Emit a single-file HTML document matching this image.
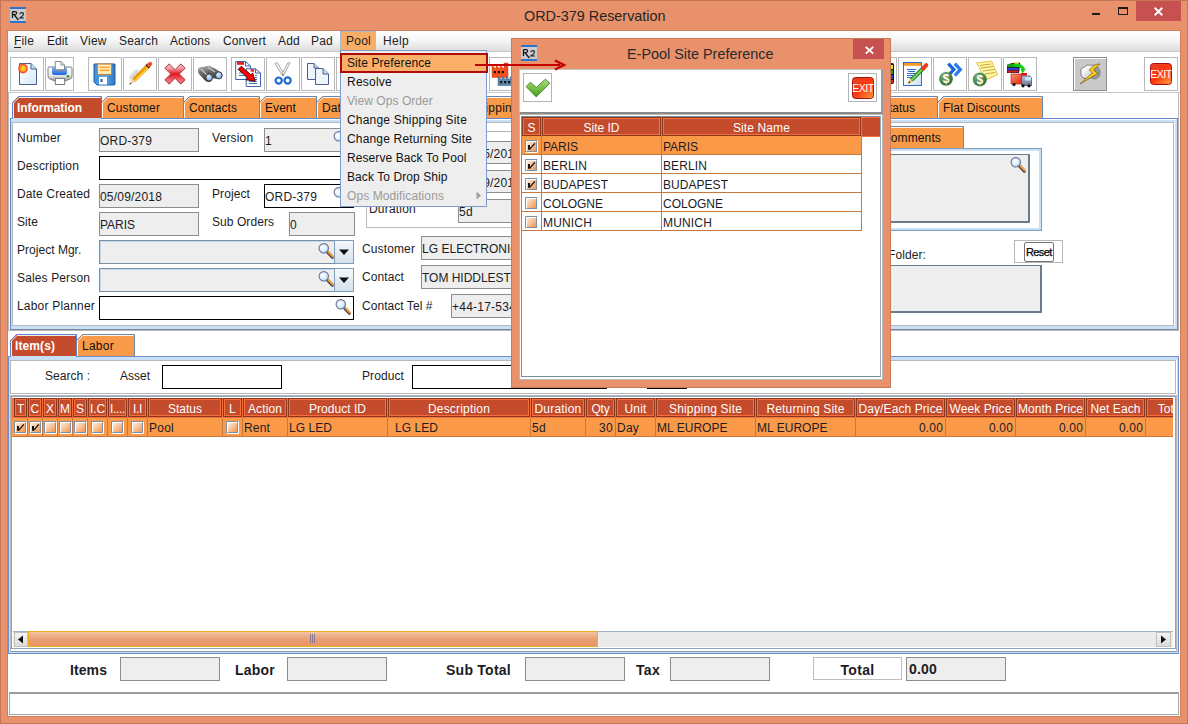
<!DOCTYPE html>
<html><head><meta charset="utf-8"><style>*{margin:0;padding:0;box-sizing:border-box}
html,body{width:1188px;height:724px;overflow:hidden}
body{position:relative;background:#E8916A;font-family:"Liberation Sans",sans-serif;font-size:12px;color:#1c1c24}
.a{position:absolute}
svg.a{overflow:visible}
.t{position:absolute;white-space:nowrap;line-height:14px;font-size:12px}
</style></head><body>
<div class="a" style="left:0px;top:0px;width:1188px;height:1px;background:#C47756"></div>
<div class="a" style="left:0px;top:0px;width:1px;height:724px;background:#C47756"></div>
<div class="a" style="left:1187px;top:0px;width:1px;height:724px;background:#C47756"></div>
<div class="a" style="left:0px;top:723px;width:1188px;height:1px;background:#C47756"></div>
<svg class="a" style="left:10px;top:7px;" width="16" height="16" viewBox="0 0 16 16"><rect x="0" y="0" width="16" height="16" fill="#C9CBCE"/><rect x="0" y="0" width="16" height="2" fill="#2F72C8"/><rect x="0" y="14" width="16" height="2" fill="#2F72C8"/><path d="M2.5 4.5 V11 M4 7.5 L8.3 13.2" stroke="#151515" stroke-width="1.3" fill="none"/><path d="M2.5 4.6 H5 Q6.6 4.6 6.6 6 Q6.6 7.5 5 7.5 H2.5" stroke="#151515" stroke-width="1.1" fill="none"/><path d="M9.6 7 Q10.5 5.6 12 5.6 Q13.5 5.6 13.5 7 Q13.5 8.5 9.8 11 H14" stroke="#202028" stroke-width="1.1" fill="none"/></svg>
<div class="t" style="left:524px;top:7px;font-size:14.4px;line-height:18px;color:#262626">ORD-379 Reservation</div>
<div class="a" style="left:1092px;top:13px;width:8px;height:2px;background:#1b1b1b"></div>
<div class="a" style="left:1118px;top:7px;width:10px;height:8px;border:1px solid #1b1b1b;border-top-width:2px"></div>
<div class="a" style="left:1136px;top:1px;width:45px;height:20px;background:#C75050"></div>
<svg class="a" style="left:1154px;top:7px;" width="9" height="9" viewBox="0 0 9 9"><path d="M0.7 0.8 L8.3 8.2 M8.3 0.8 L0.7 8.2" stroke="#fff" stroke-width="1.9"/></svg>
<div class="a" style="left:7px;top:30px;width:1174px;height:687px;background:#fff;border:1px solid #D0805A"></div>
<div class="a" style="left:8px;top:31px;width:1172px;height:20px;background:linear-gradient(#ffffff,#f6f6f6 45%,#dddddd)"></div>
<div class="a" style="left:8px;top:51px;width:1172px;height:1px;background:#C6C6C6"></div>
<div class="a" style="left:340px;top:31px;width:36px;height:19px;background:#F9AE68;border-left:1px solid #A9B8CC;border-top:1px solid #A9B8CC"></div>
<div class="t" style="left:14px;top:34px;letter-spacing:0.166px;">File</div>
<div class="t" style="left:47px;top:34px;letter-spacing:0.081px;">Edit</div>
<div class="t" style="left:80px;top:34px;letter-spacing:0.248px;">View</div>
<div class="t" style="left:119px;top:34px;letter-spacing:0.163px;">Search</div>
<div class="t" style="left:170px;top:34px;letter-spacing:0.093px;">Actions</div>
<div class="t" style="left:223px;top:34px;letter-spacing:0.140px;">Convert</div>
<div class="t" style="left:278px;top:34px;letter-spacing:0.216px;">Add</div>
<div class="t" style="left:311px;top:34px;letter-spacing:0.216px;">Pad</div>
<div class="t" style="left:346px;top:34px;letter-spacing:0.246px;">Pool</div>
<div class="t" style="left:383px;top:34px;letter-spacing:0.330px;">Help</div>
<div class="a" style="left:14px;top:47px;width:7px;height:1px;background:#222"></div>
<div class="a" style="left:8px;top:92px;width:1172px;height:1px;background:#C8C8C8"></div>
<div class="a" style="left:10px;top:57px;width:34px;height:34px;background:#fff;border:1px solid #B9B9B9"></div>
<div class="a" style="left:88px;top:57px;width:34px;height:34px;background:#fff;border:1px solid #B9B9B9"></div>
<div class="a" style="left:123px;top:57px;width:34px;height:34px;background:#fff;border:1px solid #B9B9B9"></div>
<div class="a" style="left:158px;top:57px;width:34px;height:34px;background:#fff;border:1px solid #B9B9B9"></div>
<div class="a" style="left:193px;top:57px;width:34px;height:34px;background:#fff;border:1px solid #B9B9B9"></div>
<div class="a" style="left:231px;top:57px;width:34px;height:34px;background:#fff;border:1px solid #B9B9B9"></div>
<div class="a" style="left:266px;top:57px;width:34px;height:34px;background:#fff;border:1px solid #B9B9B9"></div>
<div class="a" style="left:301px;top:57px;width:34px;height:34px;background:#fff;border:1px solid #B9B9B9"></div>
<div class="a" style="left:336px;top:57px;width:34px;height:34px;background:#fff;border:1px solid #B9B9B9"></div>
<div class="a" style="left:489px;top:57px;width:34px;height:34px;background:#fff;border:1px solid #B9B9B9"></div>
<div class="a" style="left:863px;top:57px;width:34px;height:34px;background:#fff;border:1px solid #B9B9B9"></div>
<div class="a" style="left:898px;top:57px;width:34px;height:34px;background:#fff;border:1px solid #B9B9B9"></div>
<div class="a" style="left:933px;top:57px;width:34px;height:34px;background:#fff;border:1px solid #B9B9B9"></div>
<div class="a" style="left:968px;top:57px;width:34px;height:34px;background:#fff;border:1px solid #B9B9B9"></div>
<div class="a" style="left:1003px;top:57px;width:34px;height:34px;background:#fff;border:1px solid #B9B9B9"></div>
<div class="a" style="left:1144px;top:57px;width:34px;height:34px;background:#fff;border:1px solid #B9B9B9"></div>
<div class="a" style="left:1073px;top:57px;width:34px;height:34px;background:#C9C9C9;border:1px solid #8E8E8E"></div>
<div class="a" style="left:45px;top:57px;width:29px;height:34px;background:#fff;border:1px solid #B9B9B9"></div>
<svg class="a" style="left:10px;top:57px;" width="34" height="34" viewBox="0 0 34 34"><defs><linearGradient id="pg" x1="0" y1="0" x2="1" y2="1"><stop offset="0" stop-color="#ffffff"/><stop offset="1" stop-color="#D8E8F8"/></linearGradient>
<radialGradient id="st"><stop offset="0" stop-color="#FFE030"/><stop offset="0.45" stop-color="#FFB020"/><stop offset="0.75" stop-color="#F04828"/><stop offset="1" stop-color="#F04828" stop-opacity="0"/></radialGradient></defs>
<path d="M9.5 6.5 H21 L26.5 12 V27.5 H9.5 Z" fill="url(#pg)" stroke="#4A5F8C" stroke-width="1"/>
<path d="M21 6.5 V12 H26.5" fill="#BFDDF4" stroke="#4A5F8C" stroke-width="1"/>
<circle cx="13" cy="11.5" r="5.5" fill="url(#st)"/></svg>
<svg class="a" style="left:45px;top:57px;" width="29" height="34" viewBox="0 0 29 34"><defs><linearGradient id="prb" x1="0" y1="0" x2="0" y2="1"><stop offset="0" stop-color="#ffffff"/><stop offset="0.55" stop-color="#EDEDED"/><stop offset="1" stop-color="#9A9A9A"/></linearGradient>
<linearGradient id="prt" x1="0" y1="0" x2="0" y2="1"><stop offset="0" stop-color="#8CB8F0"/><stop offset="1" stop-color="#1E64E0"/></linearGradient></defs>
<path d="M3 11 Q3 10 4.5 10 H25.5 Q27 10 27 11 V19 Q27 21 25 22 Q20 24.5 15 24.5 Q10 24.5 5 22 Q3 21 3 19 Z" fill="url(#prb)" stroke="#707070" stroke-width="0.9"/>
<path d="M7 10 H22 V15.5 Q22 18 19.5 18 H9.5 Q7 18 7 15.5 Z" fill="url(#prt)"/>
<path d="M10.3 4.5 H16 L19.5 8 V13 H10.3 Z" fill="#fff" stroke="#808080" stroke-width="0.9"/>
<path d="M16 4.5 V8 H19.5" fill="none" stroke="#808080" stroke-width="0.9"/>
<rect x="10" y="12.3" width="10" height="1.6" fill="#8A8A9A"/>
<rect x="10.3" y="21.5" width="9.4" height="6" fill="#fff" stroke="#707070" stroke-width="0.9"/>
<circle cx="23" cy="19.3" r="1.3" fill="#22A02A"/></svg>
<svg class="a" style="left:88px;top:57px;" width="34" height="34" viewBox="0 0 34 34"><defs><linearGradient id="fl" x1="0" y1="0" x2="1" y2="0"><stop offset="0" stop-color="#3C8ED8"/><stop offset="0.5" stop-color="#5AAAE8"/><stop offset="1" stop-color="#2A78C8"/></linearGradient></defs>
<path d="M6 7 H27 V27 Q27 28 26 28 H9 L6 25 Z" fill="url(#fl)" stroke="#1D5FAE" stroke-width="1"/>
<rect x="9.5" y="7" width="14" height="10.5" fill="#FFF0C0" stroke="#C8893A" stroke-width="1.2"/>
<rect x="11.5" y="9.5" width="10" height="1.6" fill="#F6A830"/><rect x="11.5" y="12.5" width="10" height="1.6" fill="#F6A830"/>
<rect x="11" y="20" width="8" height="7.5" fill="#fff"/><rect x="12.5" y="22" width="2" height="3" fill="#1F5FC0"/></svg>
<svg class="a" style="left:123px;top:57px;" width="34" height="34" viewBox="0 0 34 34"><defs><filter id="blr"><feGaussianBlur stdDeviation="1.2"/></filter></defs>
<path d="M7 22 L15 13" stroke="#000" stroke-opacity="0.18" stroke-width="4" filter="url(#blr)"/>
<path d="M6.3 27.7 L9.2 21.6 L12.4 24.8 Z" fill="#F2CFA8"/>
<path d="M6.3 27.7 L7.3 25.5 L8.5 26.7 Z" fill="#333"/>
<path d="M10.8 23.2 L24.5 9.5" stroke="#EC9A08" stroke-width="4.6"/>
<path d="M11.6 24 L25.3 10.3" stroke="#FFD040" stroke-width="1.4"/>
<path d="M24.2 9.8 L25.8 8.2" stroke="#1A1A1A" stroke-width="4.6"/>
<path d="M26 8 L27.2 6.8" stroke="#F05020" stroke-width="4" stroke-linecap="round"/></svg>
<svg class="a" style="left:158px;top:57px;" width="34" height="34" viewBox="0 0 34 34"><defs><linearGradient id="rx" x1="0" y1="0" x2="0" y2="1"><stop offset="0.2" stop-color="#F4A4A8"/><stop offset="0.5" stop-color="#E01820"/><stop offset="0.8" stop-color="#EE6A70"/></linearGradient></defs>
<path d="M6.8 11.2 L11.2 6.8 L17 12.76 L22.8 6.8 L27.2 11.2 L21.24 17 L27.2 22.8 L22.8 27.2 L17 21.24 L11.2 27.2 L6.8 22.8 L12.76 17 Z" fill="url(#rx)" stroke="#A83040" stroke-width="0.9"/></svg>
<svg class="a" style="left:193px;top:57px;" width="34" height="34" viewBox="0 0 34 34"><defs><linearGradient id="bn" x1="0" y1="0" x2="0.3" y2="1"><stop offset="0" stop-color="#B8B8B8"/><stop offset="0.45" stop-color="#6A6A6A"/><stop offset="1" stop-color="#3A3A3A"/></linearGradient>
<radialGradient id="bl" cx="0.4" cy="0.35" r="0.7"><stop offset="0" stop-color="#E4F0FF"/><stop offset="1" stop-color="#6A9CE8"/></radialGradient></defs>
<path d="M5 13 Q5 10 9 10 L14 9 Q16 8.5 18 9.5 L22 11.5 L28 15.5 Q30 17.5 29 20.5 Q27.5 22.5 24 22 L19.5 21 Q19 25 16 25 Q13 25 11.5 23 L6 17 Q4.5 15.5 5 13 Z" fill="url(#bn)"/>
<path d="M8 12 L14 18 M15 10.5 L22 15" stroke="#D8D8D8" stroke-width="1.2" opacity="0.8"/>
<ellipse cx="16.2" cy="20.5" rx="3.3" ry="3.6" fill="url(#bl)" stroke="#333" stroke-width="0.9"/>
<ellipse cx="25.8" cy="18.4" rx="3.3" ry="3.6" fill="url(#bl)" stroke="#333" stroke-width="0.9"/></svg>
<svg class="a" style="left:231px;top:57px;" width="34" height="34" viewBox="0 0 34 34"><path d="M4.7 4.5 H14.5 L19.5 9 V22.5 H4.7 Z" fill="#fff" stroke="#3A60B0" stroke-width="1"/>
<path d="M14.5 4.5 V9 H19.5" fill="none" stroke="#3A60B0" stroke-width="1"/>
<rect x="6" y="5" width="7" height="2.8" fill="#F02010"/>
<path d="M8 16 H16 M8 18.5 H16" stroke="#4A70C0" stroke-width="1"/>
<path d="M15.2 11.8 H24.5 L29.5 16 V29.5 H15.2 Z" fill="#fff" stroke="#3A60B0" stroke-width="1"/>
<path d="M24.5 11.8 V16 H29.5" fill="none" stroke="#3A60B0" stroke-width="1"/>
<rect x="19.7" y="12.2" width="3.3" height="2.5" fill="#F02010"/>
<path d="M24 18.3 H26 M24 20.4 H26 M24 22.5 H26 M18 24.4 H26 M18 26.5 H26" stroke="#4A70C0" stroke-width="1"/>
<path d="M7.14 12.36 L10.25 9.24 L19.85 17.74 L21.7 15.9 L24.2 24.3 L14.9 22.7 L16.74 20.86 Z" fill="#FF0000" stroke="#3A0000" stroke-width="0.9"/></svg>
<svg class="a" style="left:266px;top:57px;" width="34" height="34" viewBox="0 0 34 34"><path d="M9 6.5 Q10 5 11.5 6 L18 17 L16.5 18.5 Z" fill="#FAFAFA" stroke="#9A9A9A" stroke-width="0.9"/>
<path d="M24 6 Q23 5 21.8 6 L16 17 L17.5 18.5 Z" fill="#FAFAFA" stroke="#9A9A9A" stroke-width="0.9"/>
<circle cx="17" cy="18" r="1" fill="#888"/>
<circle cx="12.7" cy="23.6" r="3.1" fill="none" stroke="#1E6AD0" stroke-width="2.2"/>
<circle cx="21.6" cy="23.5" r="3.1" fill="none" stroke="#1E6AD0" stroke-width="2.2"/></svg>
<svg class="a" style="left:301px;top:57px;" width="34" height="34" viewBox="0 0 34 34"><path d="M6.5 6.5 H13 L17.5 11 V22.5 H6.5 Z" fill="#EEF5FC" stroke="#4A5F8C" stroke-width="1"/>
<path d="M13 6.5 V11 H17.5" fill="#BFDDF4" stroke="#4A5F8C" stroke-width="1"/>
<path d="M14.5 11.5 H22 L27.5 17 V27.5 H14.5 Z" fill="#EEF5FC" stroke="#4A5F8C" stroke-width="1"/>
<path d="M22 11.5 V17 H27.5" fill="#BFDDF4" stroke="#4A5F8C" stroke-width="1"/></svg>
<svg class="a" style="left:489px;top:57px;" width="34" height="34" viewBox="0 0 34 34"><path d="M3 20.5 V8.5 L7 12 V8.5 L11 12 V8.5 L15 12 V6 H19 V20.5 Z" fill="#F2501C" stroke="#C83A10" stroke-width="0.5"/>
<rect x="4.8" y="14" width="2.2" height="2.2" fill="#111"/><rect x="8.8" y="14" width="2.2" height="2.2" fill="#111"/><rect x="12.8" y="14" width="2.2" height="2.2" fill="#111"/>
<path d="M9 28.5 V19.5 L13 23 V19.5 L17 23 V19.5 L21 23 V19.5 L25 23 V28.5 Z" fill="#5E86A8" stroke="#3E5E7C" stroke-width="0.5"/>
<rect x="11" y="24" width="2.2" height="2.2" fill="#111"/><rect x="15" y="24" width="2.2" height="2.2" fill="#111"/><rect x="19" y="24" width="2.2" height="2.2" fill="#111"/></svg>
<svg class="a" style="left:863px;top:57px;" width="34" height="34" viewBox="0 0 34 34"><rect x="24" y="6" width="7" height="21" rx="2" fill="#111"/>
<rect x="26" y="8" width="4" height="4" fill="#F0E020"/><rect x="26" y="13" width="4" height="4" fill="#20A030"/><rect x="26" y="18" width="4" height="4" fill="#2040E0"/><rect x="26" y="23" width="4" height="3" fill="#E02020"/></svg>
<svg class="a" style="left:898px;top:57px;" width="34" height="34" viewBox="0 0 34 34"><defs><linearGradient id="dp" x1="0" y1="0" x2="1" y2="1"><stop offset="0.4" stop-color="#ffffff"/><stop offset="1" stop-color="#C8DCF4"/></linearGradient></defs>
<rect x="5.5" y="5.5" width="18" height="23" fill="url(#dp)" stroke="#2E6EC0" stroke-width="1"/>
<rect x="6" y="6" width="17" height="2.8" fill="#F79A2A"/>
<path d="M9 12.5 H18 M10 14.5 H17 M9 16.5 H17 M9 18.5 H15 M9 20.5 H14" stroke="#2A6AC0" stroke-width="1"/>
<path d="M13.5 23 L25.5 11" stroke="#228A22" stroke-width="4"/><path d="M13.5 23 L25.5 11" stroke="#7AD05A" stroke-width="1.8"/>
<path d="M25 11.5 L28.2 8.3" stroke="#E84020" stroke-width="4.2" stroke-linecap="round"/>
<path d="M10.3 26.5 L12 21.6 L15 24.6 Z" fill="#E8C050"/><path d="M10.3 26.5 L11 24.3 L12.5 25.8 Z" fill="#111"/></svg>
<svg class="a" style="left:933px;top:57px;" width="34" height="34" viewBox="0 0 34 34"><defs><radialGradient id="dl" cx="0.35" cy="0.3" r="0.75"><stop offset="0" stop-color="#78B078"/><stop offset="1" stop-color="#2E6A34"/></radialGradient></defs>
<path d="M15.3 6.6 L20.8 12.6 L15.3 18.6" fill="none" stroke="#1A64D8" stroke-width="3.3"/>
<path d="M21.8 6.6 L27.3 12.6 L21.8 18.6" fill="none" stroke="#2A7CEC" stroke-width="3.3"/>
<circle cx="13" cy="21.8" r="6.9" fill="url(#dl)"/>
<text x="13" y="26.2" text-anchor="middle" font-family="Liberation Sans" font-weight="bold" font-size="12" fill="#fff">$</text></svg>
<svg class="a" style="left:968px;top:57px;" width="34" height="34" viewBox="0 0 34 34"><path d="M8.8 5.9 L23.6 4.1 L29.5 17.7 L17.7 23 Z" fill="#FFF6A0" stroke="#E8B828" stroke-width="0.9"/>
<path d="M12 8.5 L23 7 M13 11 L25 9.5 M15 14 L26.5 12.5 M17 17 L27 15.5" stroke="#C8A848" stroke-width="1"/>
<circle cx="11.8" cy="22.4" r="7" fill="url(#dl)"/>
<text x="11.8" y="26.8" text-anchor="middle" font-family="Liberation Sans" font-weight="bold" font-size="12" fill="#fff">$</text></svg>
<svg class="a" style="left:1003px;top:57px;" width="34" height="34" viewBox="0 0 34 34"><defs><linearGradient id="tr" x1="0" y1="0" x2="1" y2="1"><stop offset="0" stop-color="#F89070"/><stop offset="1" stop-color="#E02810"/></linearGradient>
<linearGradient id="cab" x1="0" y1="0" x2="0" y2="1"><stop offset="0" stop-color="#B8C4E0"/><stop offset="1" stop-color="#6A7490"/></linearGradient></defs>
<path d="M4 9 Q6 6 11 6 L16 5.5 Q18 6 17 9 L16 16 H4 Z" fill="#101810"/>
<rect x="4.5" y="7" width="11" height="3.2" fill="#18A018"/>
<rect x="4.5" y="10.8" width="11" height="2.4" fill="#3040D8"/>
<rect x="4.5" y="13.6" width="11" height="2" fill="#D82020"/>
<ellipse cx="13.5" cy="6" rx="2.5" ry="1.2" fill="#E8E060"/>
<path d="M11 8 Q18 7.5 20.5 12" stroke="#10D010" stroke-width="3" fill="none"/>
<path d="M17.5 12 L23 11.5 L19.5 16.5 Z" fill="#10D010"/>
<rect x="18" y="16" width="6" height="2.6" fill="#E81010"/>
<rect x="8" y="17" width="11" height="10" fill="url(#tr)" stroke="#A02010" stroke-width="0.6"/>
<path d="M18.5 19 H27 L28.5 21 V28.5 H18.5 Z" fill="url(#cab)" stroke="#404860" stroke-width="0.7"/>
<rect x="22" y="20" width="6" height="3.5" fill="#C8E4F8"/>
<circle cx="11" cy="27.5" r="1.6" fill="#111"/><circle cx="20" cy="28.8" r="1.6" fill="#111"/><circle cx="26" cy="28.8" r="1.6" fill="#111"/></svg>
<div class="a" style="left:1074px;top:58px;width:32px;height:32px;border-left:1px solid #fff;border-top:1px solid #fff"></div>
<svg class="a" style="left:1073px;top:57px;" width="34" height="34" viewBox="0 0 34 34"><defs><linearGradient id="cl" x1="0" y1="0" x2="1" y2="1"><stop offset="0.3" stop-color="#FAFAFA"/><stop offset="1" stop-color="#B8B8B8"/></linearGradient></defs>
<ellipse cx="21.5" cy="15.5" rx="5.5" ry="6.5" fill="#9C9C9C" stroke="#666" stroke-width="0.7"/>
<path d="M8 16 Q7 11 11.5 10 Q13.5 7 17.5 8.3 Q20.5 6.8 21.5 10 Q23 13 20.5 19 Q17 22.5 12 21.5 Q7.5 20.5 8 16 Z" fill="url(#cl)" stroke="#555" stroke-width="0.7"/>
<path d="M22 7.5 L26.8 7 L20.5 13 L25 16.5 L7 27 L19.5 15.8 L16 13 Z" fill="#F6CC18" stroke="#5A4A10" stroke-width="0.6"/></svg>
<svg class="a" style="left:1150px;top:63px;" width="22" height="22" viewBox="0 0 22 22"><defs><linearGradient id="ex1150" x1="0" y1="0" x2="1" y2="1"><stop offset="0" stop-color="#E04028"/><stop offset="0.5" stop-color="#FF3A10"/><stop offset="1" stop-color="#FFA040"/></linearGradient></defs>
<rect x="0.5" y="0.5" width="21" height="21" rx="3" fill="url(#ex1150)" stroke="#A01010" stroke-width="1"/>
<text x="11" y="15" text-anchor="middle" font-family="Liberation Sans" font-size="10.5" fill="#fff" letter-spacing="-0.5">EXIT</text></svg>
<svg class="a" style="left:101px;top:96px;" width="83" height="22" viewBox="0 0 83 22"><path d="M0.5 22 V6.5 L6.5 0.5 H82.5 V22" fill="#F99A49" stroke="#6C86A8" stroke-width="1"/><path d="M1.5 22 V7 L7 1.5 H81.5" fill="none" stroke="#ffffff" stroke-width="1" opacity="0.9"/></svg>
<div class="t" style="left:107px;top:101px;letter-spacing:0.123px;color:#111;">Customer</div>
<svg class="a" style="left:183px;top:96px;" width="77" height="22" viewBox="0 0 77 22"><path d="M0.5 22 V6.5 L6.5 0.5 H76.5 V22" fill="#F99A49" stroke="#6C86A8" stroke-width="1"/><path d="M1.5 22 V7 L7 1.5 H75.5" fill="none" stroke="#ffffff" stroke-width="1" opacity="0.9"/></svg>
<div class="t" style="left:189px;top:101px;letter-spacing:0.081px;color:#111;">Contacts</div>
<svg class="a" style="left:259px;top:96px;" width="58" height="22" viewBox="0 0 58 22"><path d="M0.5 22 V6.5 L6.5 0.5 H57.5 V22" fill="#F99A49" stroke="#6C86A8" stroke-width="1"/><path d="M1.5 22 V7 L7 1.5 H56.5" fill="none" stroke="#ffffff" stroke-width="1" opacity="0.9"/></svg>
<div class="t" style="left:265px;top:101px;letter-spacing:0.063px;color:#111;">Event</div>
<svg class="a" style="left:316px;top:96px;" width="149" height="22" viewBox="0 0 149 22"><path d="M0.5 22 V6.5 L6.5 0.5 H148.5 V22" fill="#F99A49" stroke="#6C86A8" stroke-width="1"/><path d="M1.5 22 V7 L7 1.5 H147.5" fill="none" stroke="#ffffff" stroke-width="1" opacity="0.9"/></svg>
<div class="t" style="left:322px;top:101px;letter-spacing:0.130px;color:#111;">Dates</div>
<svg class="a" style="left:464px;top:96px;" width="97" height="22" viewBox="0 0 97 22"><path d="M0.5 22 V6.5 L6.5 0.5 H96.5 V22" fill="#F99A49" stroke="#6C86A8" stroke-width="1"/><path d="M1.5 22 V7 L7 1.5 H95.5" fill="none" stroke="#ffffff" stroke-width="1" opacity="0.9"/></svg>
<div class="t" style="left:470px;top:101px;letter-spacing:0.287px;color:#111;">Shipping</div>
<svg class="a" style="left:875px;top:96px;" width="63" height="22" viewBox="0 0 63 22"><path d="M0.5 22 V6.5 L6.5 0.5 H62.5 V22" fill="#F99A49" stroke="#6C86A8" stroke-width="1"/><path d="M1.5 22 V7 L7 1.5 H61.5" fill="none" stroke="#ffffff" stroke-width="1" opacity="0.9"/></svg>
<div class="t" style="left:881px;top:101px;color:#111;">Status</div>
<svg class="a" style="left:937px;top:96px;" width="106" height="22" viewBox="0 0 106 22"><path d="M0.5 22 V6.5 L6.5 0.5 H105.5 V22" fill="#F99A49" stroke="#6C86A8" stroke-width="1"/><path d="M1.5 22 V7 L7 1.5 H104.5" fill="none" stroke="#ffffff" stroke-width="1" opacity="0.9"/></svg>
<div class="t" style="left:943px;top:101px;letter-spacing:0.070px;color:#111;">Flat Discounts</div>
<div class="a" style="left:8px;top:93px;width:1px;height:238px;background:#B8B8B8"></div>
<div class="a" style="left:1178px;top:93px;width:1px;height:238px;background:#B8B8B8"></div>
<div class="a" style="left:8px;top:330px;width:1171px;height:1px;background:#B8B8B8"></div>
<div class="a" style="left:10px;top:118px;width:1168px;height:212px;border:1px solid #5F86CF;border-right-color:#7888A0;border-bottom-color:#7888A0"></div>
<div class="a" style="left:11px;top:119px;width:1166px;height:210px;border-style:solid;border-color:#C8DFF6;border-width:3px 2px 3px 1px"></div>
<div class="a" style="left:11px;top:119px;width:1165px;height:1px;background:#fff"></div>
<div class="a" style="left:12px;top:122px;width:1162px;height:204px;border:1px solid #B8B8B8;background:#fff"></div>
<svg class="a" style="left:12px;top:96px;" width="90" height="22" viewBox="0 0 90 22"><path d="M0.5 22 V6.5 L6.5 0.5 H89.5 V22" fill="#C44B2B" stroke="#5B82CF" stroke-width="1"/><path d="M1.5 22 V7 L7 1.5 H88.5" fill="none" stroke="#ffffff" stroke-width="1" opacity="0.9"/></svg>
<div class="t" style="left:17px;top:101px;letter-spacing:-0.090px;color:#fff;font-weight:bold;">Information</div>
<div class="a" style="left:13px;top:118px;width:88px;height:3px;background:#C8DFF6"></div>
<div class="t" style="left:17px;top:131px;letter-spacing:0.220px;">Number</div>
<div class="t" style="left:17px;top:159px;letter-spacing:0.180px;">Description</div>
<div class="t" style="left:17px;top:187px;letter-spacing:0.136px;">Date Created</div>
<div class="t" style="left:17px;top:215px;letter-spacing:0.081px;">Site</div>
<div class="t" style="left:17px;top:243px;letter-spacing:0.027px;">Project Mgr.</div>
<div class="t" style="left:17px;top:271px;letter-spacing:0.136px;">Sales Person</div>
<div class="t" style="left:17px;top:299px;letter-spacing:0.201px;">Labor Planner</div>
<div class="a" style="left:99px;top:128px;width:100px;height:24px;background:#EEEEEE;border:1px solid #8D8D8D;"></div>
<div class="t" style="left:100px;top:134px;letter-spacing:0.188px;">ORD-379</div>
<div class="a" style="left:99px;top:156px;width:360px;height:24px;background:#fff;border:1px solid #000"></div>
<div class="a" style="left:99px;top:184px;width:100px;height:24px;background:#EEEEEE;border:1px solid #8D8D8D;"></div>
<div class="t" style="left:100px;top:190px;letter-spacing:0.194px;">05/09/2018</div>
<div class="a" style="left:99px;top:212px;width:100px;height:24px;background:#EEEEEE;border:1px solid #8D8D8D;"></div>
<div class="t" style="left:100px;top:218px;">PARIS</div>
<div class="a" style="left:99px;top:240px;width:255px;height:24px;background:#EEEEEE;border:1px solid #7A8EA4;box-shadow:inset 1px 1px 0 #C4D8EE"></div>
<svg class="a" style="left:318px;top:243px;" width="17" height="17" viewBox="0 0 17 17"><defs><radialGradient id="mg318_243" cx="0.4" cy="0.4" r="0.65"><stop offset="0" stop-color="#ffffff"/><stop offset="0.6" stop-color="#D8F0FC"/><stop offset="1" stop-color="#90CCF0"/></radialGradient></defs>
<path d="M9.6 9.2 L14.4 14.2" stroke="#404058" stroke-width="3.2" stroke-linecap="round"/>
<path d="M10.2 8.8 L14.9 13.7" stroke="#F6A232" stroke-width="1.9" stroke-linecap="round"/>
<circle cx="5.8" cy="5.3" r="4.7" fill="url(#mg318_243)" stroke="#707098" stroke-width="1.1"/></svg>
<div class="a" style="left:334px;top:240px;width:20px;height:24px;background:linear-gradient(#f4f8fc,#d4e2ee);border:1px solid #7F9DB9"></div>
<svg class="a" style="left:338px;top:249px;" width="12" height="7" viewBox="0 0 12 7"><path d="M1 0.5 H11 L6 6 Z" fill="#111"/></svg>
<div class="a" style="left:99px;top:268px;width:255px;height:24px;background:#EEEEEE;border:1px solid #7A8EA4;box-shadow:inset 1px 1px 0 #C4D8EE"></div>
<svg class="a" style="left:318px;top:271px;" width="17" height="17" viewBox="0 0 17 17"><defs><radialGradient id="mg318_271" cx="0.4" cy="0.4" r="0.65"><stop offset="0" stop-color="#ffffff"/><stop offset="0.6" stop-color="#D8F0FC"/><stop offset="1" stop-color="#90CCF0"/></radialGradient></defs>
<path d="M9.6 9.2 L14.4 14.2" stroke="#404058" stroke-width="3.2" stroke-linecap="round"/>
<path d="M10.2 8.8 L14.9 13.7" stroke="#F6A232" stroke-width="1.9" stroke-linecap="round"/>
<circle cx="5.8" cy="5.3" r="4.7" fill="url(#mg318_271)" stroke="#707098" stroke-width="1.1"/></svg>
<div class="a" style="left:334px;top:268px;width:20px;height:24px;background:linear-gradient(#f4f8fc,#d4e2ee);border:1px solid #7F9DB9"></div>
<svg class="a" style="left:338px;top:277px;" width="12" height="7" viewBox="0 0 12 7"><path d="M1 0.5 H11 L6 6 Z" fill="#111"/></svg>
<div class="a" style="left:99px;top:296px;width:255px;height:24px;background:#fff;border:1px solid #000"></div>
<svg class="a" style="left:335px;top:299px;" width="17" height="17" viewBox="0 0 17 17"><defs><radialGradient id="mg335_299" cx="0.4" cy="0.4" r="0.65"><stop offset="0" stop-color="#ffffff"/><stop offset="0.6" stop-color="#D8F0FC"/><stop offset="1" stop-color="#90CCF0"/></radialGradient></defs>
<path d="M9.6 9.2 L14.4 14.2" stroke="#404058" stroke-width="3.2" stroke-linecap="round"/>
<path d="M10.2 8.8 L14.9 13.7" stroke="#F6A232" stroke-width="1.9" stroke-linecap="round"/>
<circle cx="5.8" cy="5.3" r="4.7" fill="url(#mg335_299)" stroke="#707098" stroke-width="1.1"/></svg>
<div class="t" style="left:212px;top:131px;letter-spacing:0.188px;">Version</div>
<div class="t" style="left:212px;top:187px;letter-spacing:0.093px;">Project</div>
<div class="t" style="left:212px;top:215px;letter-spacing:0.064px;">Sub Orders</div>
<div class="a" style="left:264px;top:128px;width:90px;height:24px;background:#EEEEEE;border:1px solid #8D8D8D;"></div>
<div class="t" style="left:265px;top:134px;letter-spacing:0.326px;">1</div>
<svg class="a" style="left:333px;top:131px;" width="17" height="17" viewBox="0 0 17 17"><defs><radialGradient id="mg333_131" cx="0.4" cy="0.4" r="0.65"><stop offset="0" stop-color="#ffffff"/><stop offset="0.6" stop-color="#D8F0FC"/><stop offset="1" stop-color="#90CCF0"/></radialGradient></defs>
<path d="M9.6 9.2 L14.4 14.2" stroke="#404058" stroke-width="3.2" stroke-linecap="round"/>
<path d="M10.2 8.8 L14.9 13.7" stroke="#F6A232" stroke-width="1.9" stroke-linecap="round"/>
<circle cx="5.8" cy="5.3" r="4.7" fill="url(#mg333_131)" stroke="#707098" stroke-width="1.1"/></svg>
<div class="a" style="left:264px;top:184px;width:90px;height:24px;background:#fff;border:1px solid #000"></div>
<div class="t" style="left:265px;top:190px;letter-spacing:0.188px;">ORD-379</div>
<svg class="a" style="left:333px;top:187px;" width="17" height="17" viewBox="0 0 17 17"><defs><radialGradient id="mg333_187" cx="0.4" cy="0.4" r="0.65"><stop offset="0" stop-color="#ffffff"/><stop offset="0.6" stop-color="#D8F0FC"/><stop offset="1" stop-color="#90CCF0"/></radialGradient></defs>
<path d="M9.6 9.2 L14.4 14.2" stroke="#404058" stroke-width="3.2" stroke-linecap="round"/>
<path d="M10.2 8.8 L14.9 13.7" stroke="#F6A232" stroke-width="1.9" stroke-linecap="round"/>
<circle cx="5.8" cy="5.3" r="4.7" fill="url(#mg333_187)" stroke="#707098" stroke-width="1.1"/></svg>
<div class="a" style="left:289px;top:212px;width:66px;height:24px;background:#EEEEEE;border:1px solid #8D8D8D;"></div>
<div class="t" style="left:290px;top:218px;letter-spacing:0.326px;">0</div>
<div class="a" style="left:366px;top:131px;width:160px;height:97px;border:1px solid #BBBBBB;border-top-color:#B4B4B4"></div>
<div class="a" style="left:456px;top:141px;width:100px;height:23px;background:#EEEEEE;border:1px solid #8D8D8D;"></div>
<div class="t" style="left:459px;top:147px;letter-spacing:0.194px;">05/05/2018</div>
<div class="a" style="left:456px;top:170px;width:100px;height:23px;background:#EEEEEE;border:1px solid #8D8D8D;"></div>
<div class="t" style="left:459px;top:176px;letter-spacing:0.194px;">05/09/2018</div>
<div class="t" style="left:369px;top:202px;letter-spacing:0.205px;">Duration</div>
<div class="a" style="left:458px;top:199px;width:60px;height:24px;background:#EEEEEE;border:1px solid #8D8D8D;"></div>
<div class="t" style="left:459px;top:205px;letter-spacing:0.326px;">5d</div>
<div class="t" style="left:362px;top:242px;letter-spacing:0.123px;">Customer</div>
<div class="a" style="left:421px;top:236px;width:100px;height:24px;background:#EEEEEE;border:1px solid #8D8D8D;"></div>
<div class="t" style="left:422px;top:242px;letter-spacing:0.022px;">LG ELECTRONICS</div>
<div class="t" style="left:362px;top:270px;letter-spacing:0.092px;">Contact</div>
<div class="a" style="left:421px;top:265px;width:100px;height:24px;background:#EEEEEE;border:1px solid #8D8D8D;"></div>
<div class="t" style="left:422px;top:271px;letter-spacing:-0.024px;">TOM HIDDLESTON</div>
<div class="t" style="left:362px;top:299px;letter-spacing:0.049px;">Contact Tel #</div>
<div class="a" style="left:451px;top:294px;width:70px;height:24px;background:#EEEEEE;border:1px solid #8D8D8D;"></div>
<div class="t" style="left:452px;top:300px;letter-spacing:0.237px;">+44-17-5345</div>
<svg class="a" style="left:876px;top:126px;" width="88" height="22" viewBox="0 0 88 22"><path d="M0.5 22 V6.5 L6.5 0.5 H87.5 V22" fill="#F99A49" stroke="#6C86A8" stroke-width="1"/><path d="M1.5 22 V7 L7 1.5 H86.5" fill="none" stroke="#ffffff" stroke-width="1" opacity="0.9"/></svg>
<div class="t" style="left:882px;top:131px;letter-spacing:0.123px;color:#111;">Comments</div>
<div class="a" style="left:880px;top:148px;width:162px;height:83px;border:1px solid #7F9DB9;background:#fff"></div>
<div class="a" style="left:881px;top:149px;width:160px;height:81px;border:2px solid #C8DFF6"></div>
<div class="a" style="left:883px;top:154px;width:147px;height:69px;background:#EEEEEE;border:1px solid #6D7A88;border-width:1px 2px 2px 1px"></div>
<svg class="a" style="left:1010px;top:157px;" width="17" height="17" viewBox="0 0 17 17"><defs><radialGradient id="mg1010_157" cx="0.4" cy="0.4" r="0.65"><stop offset="0" stop-color="#ffffff"/><stop offset="0.6" stop-color="#D8F0FC"/><stop offset="1" stop-color="#90CCF0"/></radialGradient></defs>
<path d="M9.6 9.2 L14.4 14.2" stroke="#404058" stroke-width="3.2" stroke-linecap="round"/>
<path d="M10.2 8.8 L14.9 13.7" stroke="#F6A232" stroke-width="1.9" stroke-linecap="round"/>
<circle cx="5.8" cy="5.3" r="4.7" fill="url(#mg1010_157)" stroke="#707098" stroke-width="1.1"/></svg>
<div class="t" style="left:888px;top:248px;letter-spacing:0.093px;">Folder:</div>
<div class="a" style="left:1014px;top:240px;width:49px;height:23px;border:1px solid #B8B8B8;background:#fff"></div>
<div class="a" style="left:1024px;top:242px;width:30px;height:20px;border:1px solid #7A7272;border-radius:2px;background:#fff"></div>
<div class="t" style="left:1026px;top:246px;font-size:11px;line-height:13px;color:#000;letter-spacing:-0.6px;-webkit-text-stroke:0.25px #000">Reset</div>
<div class="a" style="left:880px;top:265px;width:162px;height:48px;background:#EEEEEE;border:1px solid #6D7A88;border-width:1px 2px 2px 1px"></div>
<svg class="a" style="left:76px;top:334px;" width="59" height="22" viewBox="0 0 59 22"><path d="M0.5 22 V6.5 L6.5 0.5 H58.5 V22" fill="#F99A49" stroke="#6C86A8" stroke-width="1"/><path d="M1.5 22 V7 L7 1.5 H57.5" fill="none" stroke="#ffffff" stroke-width="1" opacity="0.9"/></svg>
<div class="t" style="left:82px;top:339px;letter-spacing:0.262px;color:#111;">Labor</div>
<div class="a" style="left:8px;top:356px;width:1171px;height:298px;border:1px solid #6E8FCB"></div>
<div class="a" style="left:9px;top:357px;width:1169px;height:296px;border:1px solid #C8DFF6;border-top-width:3px;border-bottom-width:2px"></div>
<div class="a" style="left:10px;top:360px;width:1166px;height:34px;border:1px solid #B8B8B8;background:#fff"></div>
<svg class="a" style="left:10px;top:334px;" width="67" height="22" viewBox="0 0 67 22"><path d="M0.5 22 V6.5 L6.5 0.5 H66.5 V22" fill="#C44B2B" stroke="#5B82CF" stroke-width="1"/><path d="M1.5 22 V7 L7 1.5 H65.5" fill="none" stroke="#ffffff" stroke-width="1" opacity="0.9"/></svg>
<div class="t" style="left:15px;top:339px;letter-spacing:0.094px;color:#fff;font-weight:bold;">Item(s)</div>
<div class="a" style="left:11px;top:356px;width:65px;height:3px;background:#C8DFF6"></div>
<div class="t" style="left:45px;top:369px;letter-spacing:0.039px;">Search :</div>
<div class="t" style="left:120px;top:369px;">Asset</div>
<div class="a" style="left:162px;top:365px;width:120px;height:24px;background:#fff;border:1px solid #000"></div>
<div class="t" style="left:362px;top:369px;letter-spacing:0.092px;">Product</div>
<div class="a" style="left:412px;top:365px;width:195px;height:24px;background:#fff;border:1px solid #000"></div>
<div class="a" style="left:647px;top:365px;width:40px;height:24px;background:#fff;border:1px solid #000"></div>
<div class="a" style="left:10px;top:395px;width:1167px;height:257px;border:1px solid #B8B8B8;border-bottom-color:#8398B0;background:#fff"></div>
<div class="a" style="left:11px;top:396px;width:1165px;height:253px;border:1px solid #8DA4BE"></div>
<div class="a" style="left:12px;top:398px;width:1161px;height:20px;background:#F4703E"></div>
<div class="a" style="left:0;top:0;width:1173px;height:724px;overflow:hidden">
<div class="a" style="left:14px;top:398px;width:13px;height:19px;background:#C44B2B;border:1px solid #8A381C;box-shadow:inset 0 0 0 1px #F4703E"></div>
<div class="t" style="left:13px;top:402px;width:15px;text-align:center;letter-spacing:-0.330px;color:#fff">T</div>
<div class="a" style="left:28px;top:398px;width:14px;height:19px;background:#C44B2B;border:1px solid #8A381C;box-shadow:inset 0 0 0 1px #F4703E"></div>
<div class="t" style="left:27px;top:402px;width:16px;text-align:center;letter-spacing:0.334px;color:#fff">C</div>
<div class="a" style="left:43px;top:398px;width:14px;height:19px;background:#C44B2B;border:1px solid #8A381C;box-shadow:inset 0 0 0 1px #F4703E"></div>
<div class="t" style="left:42px;top:402px;width:16px;text-align:center;letter-spacing:-0.004px;color:#fff">X</div>
<div class="a" style="left:58px;top:398px;width:14px;height:19px;background:#C44B2B;border:1px solid #8A381C;box-shadow:inset 0 0 0 1px #F4703E"></div>
<div class="t" style="left:57px;top:402px;width:16px;text-align:center;letter-spacing:0.004px;color:#fff">M</div>
<div class="a" style="left:73px;top:398px;width:14px;height:19px;background:#C44B2B;border:1px solid #8A381C;box-shadow:inset 0 0 0 1px #F4703E"></div>
<div class="t" style="left:72px;top:402px;width:16px;text-align:center;letter-spacing:-0.004px;color:#fff">S</div>
<div class="a" style="left:88px;top:398px;width:19px;height:19px;background:#C44B2B;border:1px solid #8A381C;box-shadow:inset 0 0 0 1px #F4703E"></div>
<div class="t" style="left:87px;top:402px;width:21px;text-align:center;letter-spacing:-0.111px;color:#fff">I.C</div>
<div class="a" style="left:108px;top:398px;width:19px;height:19px;background:#C44B2B;border:1px solid #8A381C;box-shadow:inset 0 0 0 1px #F4703E"></div>
<div class="t" style="left:107px;top:402px;width:21px;text-align:center;letter-spacing:-0.334px;color:#fff">I....</div>
<div class="a" style="left:128px;top:398px;width:19px;height:19px;background:#C44B2B;border:1px solid #8A381C;box-shadow:inset 0 0 0 1px #F4703E"></div>
<div class="t" style="left:127px;top:402px;width:21px;text-align:center;letter-spacing:-0.334px;color:#fff">I.I</div>
<div class="a" style="left:148px;top:398px;width:74px;height:19px;background:#C44B2B;border:1px solid #8A381C;box-shadow:inset 0 0 0 1px #F4703E"></div>
<div class="t" style="left:147px;top:402px;width:76px;text-align:center;letter-spacing:-0.003px;color:#fff">Status</div>
<div class="a" style="left:223px;top:398px;width:19px;height:19px;background:#C44B2B;border:1px solid #8A381C;box-shadow:inset 0 0 0 1px #F4703E"></div>
<div class="t" style="left:222px;top:402px;width:21px;text-align:center;letter-spacing:0.326px;color:#fff">L</div>
<div class="a" style="left:243px;top:398px;width:44px;height:19px;background:#C44B2B;border:1px solid #8A381C;box-shadow:inset 0 0 0 1px #F4703E"></div>
<div class="t" style="left:242px;top:402px;width:46px;text-align:center;letter-spacing:0.108px;color:#fff">Action</div>
<div class="a" style="left:288px;top:398px;width:99px;height:19px;background:#C44B2B;border:1px solid #8A381C;box-shadow:inset 0 0 0 1px #F4703E"></div>
<div class="t" style="left:287px;top:402px;width:101px;text-align:center;letter-spacing:0.031px;color:#fff">Product ID</div>
<div class="a" style="left:388px;top:398px;width:142px;height:19px;background:#C44B2B;border:1px solid #8A381C;box-shadow:inset 0 0 0 1px #F4703E"></div>
<div class="t" style="left:387px;top:402px;width:144px;text-align:center;letter-spacing:0.180px;color:#fff">Description</div>
<div class="a" style="left:531px;top:398px;width:54px;height:19px;background:#C44B2B;border:1px solid #8A381C;box-shadow:inset 0 0 0 1px #F4703E"></div>
<div class="t" style="left:530px;top:402px;width:56px;text-align:center;letter-spacing:0.205px;color:#fff">Duration</div>
<div class="a" style="left:586px;top:398px;width:29px;height:19px;background:#C44B2B;border:1px solid #8A381C;box-shadow:inset 0 0 0 1px #F4703E"></div>
<div class="t" style="left:585px;top:402px;width:31px;text-align:center;letter-spacing:-0.223px;color:#fff">Qty</div>
<div class="a" style="left:616px;top:398px;width:39px;height:19px;background:#C44B2B;border:1px solid #8A381C;box-shadow:inset 0 0 0 1px #F4703E"></div>
<div class="t" style="left:615px;top:402px;width:41px;text-align:center;letter-spacing:0.165px;color:#fff">Unit</div>
<div class="a" style="left:656px;top:398px;width:99px;height:19px;background:#C44B2B;border:1px solid #8A381C;box-shadow:inset 0 0 0 1px #F4703E"></div>
<div class="t" style="left:655px;top:402px;width:101px;text-align:center;letter-spacing:0.176px;color:#fff">Shipping Site</div>
<div class="a" style="left:756px;top:398px;width:99px;height:19px;background:#C44B2B;border:1px solid #8A381C;box-shadow:inset 0 0 0 1px #F4703E"></div>
<div class="t" style="left:755px;top:402px;width:101px;text-align:center;letter-spacing:0.140px;color:#fff">Returning Site</div>
<div class="a" style="left:856px;top:398px;width:89px;height:19px;background:#C44B2B;border:1px solid #8A381C;box-shadow:inset 0 0 0 1px #F4703E"></div>
<div class="t" style="left:855px;top:402px;width:91px;text-align:center;letter-spacing:0.093px;color:#fff">Day/Each Price</div>
<div class="a" style="left:946px;top:398px;width:69px;height:19px;background:#C44B2B;border:1px solid #8A381C;box-shadow:inset 0 0 0 1px #F4703E"></div>
<div class="t" style="left:945px;top:402px;width:71px;text-align:center;letter-spacing:0.065px;color:#fff">Week Price</div>
<div class="a" style="left:1016px;top:398px;width:69px;height:19px;background:#C44B2B;border:1px solid #8A381C;box-shadow:inset 0 0 0 1px #F4703E"></div>
<div class="t" style="left:1015px;top:402px;width:71px;text-align:center;letter-spacing:0.089px;color:#fff">Month Price</div>
<div class="a" style="left:1086px;top:398px;width:59px;height:19px;background:#C44B2B;border:1px solid #8A381C;box-shadow:inset 0 0 0 1px #F4703E"></div>
<div class="t" style="left:1085px;top:402px;width:61px;text-align:center;letter-spacing:0.080px;color:#fff">Net Each</div>
<div class="a" style="left:1146px;top:398px;width:49px;height:19px;background:#C44B2B;border:1px solid #8A381C;box-shadow:inset 0 0 0 1px #F4703E"></div>
<div class="t" style="left:1145px;top:402px;width:51px;text-align:center;letter-spacing:0.064px;color:#fff">Total</div>
</div>
<div class="a" style="left:12px;top:418px;width:1161px;height:19px;background:#FA9A49"></div>
<div class="a" style="left:12px;top:436px;width:1161px;height:1px;background:#C8783A"></div>
<div class="a" style="left:27px;top:418px;width:1px;height:19px;background:#C8783A"></div>
<div class="a" style="left:42px;top:418px;width:1px;height:19px;background:#C8783A"></div>
<div class="a" style="left:57px;top:418px;width:1px;height:19px;background:#C8783A"></div>
<div class="a" style="left:72px;top:418px;width:1px;height:19px;background:#C8783A"></div>
<div class="a" style="left:87px;top:418px;width:1px;height:19px;background:#C8783A"></div>
<div class="a" style="left:107px;top:418px;width:1px;height:19px;background:#C8783A"></div>
<div class="a" style="left:127px;top:418px;width:1px;height:19px;background:#C8783A"></div>
<div class="a" style="left:147px;top:418px;width:1px;height:19px;background:#C8783A"></div>
<div class="a" style="left:222px;top:418px;width:1px;height:19px;background:#C8783A"></div>
<div class="a" style="left:242px;top:418px;width:1px;height:19px;background:#C8783A"></div>
<div class="a" style="left:287px;top:418px;width:1px;height:19px;background:#C8783A"></div>
<div class="a" style="left:387px;top:418px;width:1px;height:19px;background:#C8783A"></div>
<div class="a" style="left:530px;top:418px;width:1px;height:19px;background:#C8783A"></div>
<div class="a" style="left:585px;top:418px;width:1px;height:19px;background:#C8783A"></div>
<div class="a" style="left:615px;top:418px;width:1px;height:19px;background:#C8783A"></div>
<div class="a" style="left:655px;top:418px;width:1px;height:19px;background:#C8783A"></div>
<div class="a" style="left:755px;top:418px;width:1px;height:19px;background:#C8783A"></div>
<div class="a" style="left:855px;top:418px;width:1px;height:19px;background:#C8783A"></div>
<div class="a" style="left:945px;top:418px;width:1px;height:19px;background:#C8783A"></div>
<div class="a" style="left:1015px;top:418px;width:1px;height:19px;background:#C8783A"></div>
<div class="a" style="left:1085px;top:418px;width:1px;height:19px;background:#C8783A"></div>
<div class="a" style="left:1145px;top:418px;width:1px;height:19px;background:#C8783A"></div>
<svg class="a" style="left:14px;top:421px;" width="13" height="13" viewBox="0 0 13 13"><defs><linearGradient id="cg" x1="0" y1="0" x2="1" y2="1"><stop offset="0" stop-color="#FFF4EC"/><stop offset="1" stop-color="#F28C3E"/></linearGradient></defs><rect x="1" y="1" width="11" height="11" fill="url(#cg)"/><path d="M0.5 12.5 V0.5 H12.5" fill="none" stroke="#7890A8"/><path d="M0.5 12.5 H12.5 V0.5" fill="none" stroke="#ffffff"/><path d="M1.5 11.5 V1.5 H11.5" fill="none" stroke="#ffffff"/><path d="M1.5 11.5 H11.5 V1.5" fill="none" stroke="#7890A8"/><path d="M4 5 V9.8" stroke="#151515" stroke-width="2"/><path d="M4.6 9.4 L9.8 3.4" stroke="#151515" stroke-width="1.4"/></svg>
<svg class="a" style="left:29px;top:421px;" width="13" height="13" viewBox="0 0 13 13"><defs><linearGradient id="cg" x1="0" y1="0" x2="1" y2="1"><stop offset="0" stop-color="#FFF4EC"/><stop offset="1" stop-color="#F28C3E"/></linearGradient></defs><rect x="1" y="1" width="11" height="11" fill="url(#cg)"/><path d="M0.5 12.5 V0.5 H12.5" fill="none" stroke="#7890A8"/><path d="M0.5 12.5 H12.5 V0.5" fill="none" stroke="#ffffff"/><path d="M1.5 11.5 V1.5 H11.5" fill="none" stroke="#ffffff"/><path d="M1.5 11.5 H11.5 V1.5" fill="none" stroke="#7890A8"/><path d="M4 5 V9.8" stroke="#151515" stroke-width="2"/><path d="M4.6 9.4 L9.8 3.4" stroke="#151515" stroke-width="1.4"/></svg>
<svg class="a" style="left:44px;top:421px;" width="13" height="13" viewBox="0 0 13 13"><defs><linearGradient id="cg" x1="0" y1="0" x2="1" y2="1"><stop offset="0" stop-color="#FFF4EC"/><stop offset="1" stop-color="#F28C3E"/></linearGradient></defs><rect x="1" y="1" width="11" height="11" fill="url(#cg)"/><path d="M0.5 12.5 V0.5 H12.5" fill="none" stroke="#7890A8"/><path d="M0.5 12.5 H12.5 V0.5" fill="none" stroke="#ffffff"/><path d="M1.5 11.5 V1.5 H11.5" fill="none" stroke="#ffffff"/><path d="M1.5 11.5 H11.5 V1.5" fill="none" stroke="#7890A8"/></svg>
<svg class="a" style="left:59px;top:421px;" width="13" height="13" viewBox="0 0 13 13"><defs><linearGradient id="cg" x1="0" y1="0" x2="1" y2="1"><stop offset="0" stop-color="#FFF4EC"/><stop offset="1" stop-color="#F28C3E"/></linearGradient></defs><rect x="1" y="1" width="11" height="11" fill="url(#cg)"/><path d="M0.5 12.5 V0.5 H12.5" fill="none" stroke="#7890A8"/><path d="M0.5 12.5 H12.5 V0.5" fill="none" stroke="#ffffff"/><path d="M1.5 11.5 V1.5 H11.5" fill="none" stroke="#ffffff"/><path d="M1.5 11.5 H11.5 V1.5" fill="none" stroke="#7890A8"/></svg>
<svg class="a" style="left:74px;top:421px;" width="13" height="13" viewBox="0 0 13 13"><defs><linearGradient id="cg" x1="0" y1="0" x2="1" y2="1"><stop offset="0" stop-color="#FFF4EC"/><stop offset="1" stop-color="#F28C3E"/></linearGradient></defs><rect x="1" y="1" width="11" height="11" fill="url(#cg)"/><path d="M0.5 12.5 V0.5 H12.5" fill="none" stroke="#7890A8"/><path d="M0.5 12.5 H12.5 V0.5" fill="none" stroke="#ffffff"/><path d="M1.5 11.5 V1.5 H11.5" fill="none" stroke="#ffffff"/><path d="M1.5 11.5 H11.5 V1.5" fill="none" stroke="#7890A8"/></svg>
<svg class="a" style="left:91px;top:421px;" width="13" height="13" viewBox="0 0 13 13"><defs><linearGradient id="cg" x1="0" y1="0" x2="1" y2="1"><stop offset="0" stop-color="#FFF4EC"/><stop offset="1" stop-color="#F28C3E"/></linearGradient></defs><rect x="1" y="1" width="11" height="11" fill="url(#cg)"/><path d="M0.5 12.5 V0.5 H12.5" fill="none" stroke="#7890A8"/><path d="M0.5 12.5 H12.5 V0.5" fill="none" stroke="#ffffff"/><path d="M1.5 11.5 V1.5 H11.5" fill="none" stroke="#ffffff"/><path d="M1.5 11.5 H11.5 V1.5" fill="none" stroke="#7890A8"/></svg>
<svg class="a" style="left:111px;top:421px;" width="13" height="13" viewBox="0 0 13 13"><defs><linearGradient id="cg" x1="0" y1="0" x2="1" y2="1"><stop offset="0" stop-color="#FFF4EC"/><stop offset="1" stop-color="#F28C3E"/></linearGradient></defs><rect x="1" y="1" width="11" height="11" fill="url(#cg)"/><path d="M0.5 12.5 V0.5 H12.5" fill="none" stroke="#7890A8"/><path d="M0.5 12.5 H12.5 V0.5" fill="none" stroke="#ffffff"/><path d="M1.5 11.5 V1.5 H11.5" fill="none" stroke="#ffffff"/><path d="M1.5 11.5 H11.5 V1.5" fill="none" stroke="#7890A8"/></svg>
<svg class="a" style="left:131px;top:421px;" width="13" height="13" viewBox="0 0 13 13"><defs><linearGradient id="cg" x1="0" y1="0" x2="1" y2="1"><stop offset="0" stop-color="#FFF4EC"/><stop offset="1" stop-color="#F28C3E"/></linearGradient></defs><rect x="1" y="1" width="11" height="11" fill="url(#cg)"/><path d="M0.5 12.5 V0.5 H12.5" fill="none" stroke="#7890A8"/><path d="M0.5 12.5 H12.5 V0.5" fill="none" stroke="#ffffff"/><path d="M1.5 11.5 V1.5 H11.5" fill="none" stroke="#ffffff"/><path d="M1.5 11.5 H11.5 V1.5" fill="none" stroke="#7890A8"/></svg>
<svg class="a" style="left:226px;top:421px;" width="13" height="13" viewBox="0 0 13 13"><defs><linearGradient id="cg" x1="0" y1="0" x2="1" y2="1"><stop offset="0" stop-color="#FFF4EC"/><stop offset="1" stop-color="#F28C3E"/></linearGradient></defs><rect x="1" y="1" width="11" height="11" fill="url(#cg)"/><path d="M0.5 12.5 V0.5 H12.5" fill="none" stroke="#7890A8"/><path d="M0.5 12.5 H12.5 V0.5" fill="none" stroke="#ffffff"/><path d="M1.5 11.5 V1.5 H11.5" fill="none" stroke="#ffffff"/><path d="M1.5 11.5 H11.5 V1.5" fill="none" stroke="#7890A8"/></svg>
<div class="t" style="left:149px;top:421px;letter-spacing:0.246px;">Pool</div>
<div class="t" style="left:244px;top:421px;letter-spacing:0.163px;">Rent</div>
<div class="t" style="left:289px;top:421px;letter-spacing:0.052px;">LG LED</div>
<div class="t" style="left:395px;top:421px;letter-spacing:0.052px;">LG LED</div>
<div class="t" style="left:532px;top:421px;letter-spacing:0.326px;">5d</div>
<div class="t" style="left:617px;top:421px;letter-spacing:0.220px;">Day</div>
<div class="t" style="left:657px;top:421px;letter-spacing:0.035px;">ML EUROPE</div>
<div class="t" style="left:757px;top:421px;letter-spacing:0.035px;">ML EUROPE</div>
<div class="t" style="left:533px;top:421px;width:80px;text-align:right;letter-spacing:0.326px;">30</div>
<div class="t" style="left:863px;top:421px;width:80px;text-align:right;letter-spacing:0.161px;">0.00</div>
<div class="t" style="left:933px;top:421px;width:80px;text-align:right;letter-spacing:0.161px;">0.00</div>
<div class="t" style="left:1003px;top:421px;width:80px;text-align:right;letter-spacing:0.161px;">0.00</div>
<div class="t" style="left:1063px;top:421px;width:80px;text-align:right;letter-spacing:0.161px;">0.00</div>
<div class="a" style="left:13px;top:631px;width:1160px;height:16px;background:#EBEBEB;border-top:1px solid #A0B4C8"></div>
<div class="a" style="left:14px;top:632px;width:14px;height:15px;background:linear-gradient(#f4f4f4,#dcdcdc);border:1px solid #C0C0C0"></div>
<svg class="a" style="left:17px;top:635px;" width="8" height="9" viewBox="0 0 8 9"><path d="M6 0.5 V8.5 L1 4.5 Z" fill="#111"/></svg>
<div class="a" style="left:28px;top:631px;width:570px;height:16px;background:linear-gradient(#F2C4A4,#E8A074 50%,#E89464);border:1px solid #F0B020"></div>
<svg class="a" style="left:310px;top:634px;" width="6" height="9" viewBox="0 0 6 9"><path d="M0.5 0 V9 M2.5 0 V9 M4.5 0 V9" stroke="#8A7890" stroke-width="1"/></svg>
<div class="a" style="left:1156px;top:632px;width:15px;height:15px;background:linear-gradient(#f4f4f4,#dcdcdc);border:1px solid #C0C0C0"></div>
<svg class="a" style="left:1160px;top:635px;" width="8" height="9" viewBox="0 0 8 9"><path d="M1 0.5 V8.5 L6 4.5 Z" fill="#111"/></svg>
<div class="t" style="left:70px;top:663px;letter-spacing:0.086px;font-weight:bold;font-size:14px;line-height:14px">Items</div>
<div class="a" style="left:120px;top:657px;width:100px;height:24px;background:#EEEEEE;border:1px solid #8D8D8D;"></div>
<div class="t" style="left:235px;top:663px;letter-spacing:0.222px;font-weight:bold;font-size:14px;line-height:14px">Labor</div>
<div class="a" style="left:287px;top:657px;width:100px;height:24px;background:#EEEEEE;border:1px solid #8D8D8D;"></div>
<div class="t" style="left:446px;top:663px;letter-spacing:0.248px;font-weight:bold;font-size:14px;line-height:14px">Sub Total</div>
<div class="a" style="left:525px;top:657px;width:100px;height:24px;background:#EEEEEE;border:1px solid #8D8D8D;"></div>
<div class="t" style="left:636px;top:663px;letter-spacing:0.292px;font-weight:bold;font-size:14px;line-height:14px">Tax</div>
<div class="a" style="left:670px;top:657px;width:100px;height:24px;background:#EEEEEE;border:1px solid #8D8D8D;"></div>
<div class="a" style="left:813px;top:657px;width:89px;height:23px;border:1px solid #BDBDBD;background:#fff"></div>
<div class="t" style="left:813px;top:663px;width:89px;text-align:center;letter-spacing:0.312px;font-weight:bold;font-size:14px">Total</div>
<div class="a" style="left:906px;top:657px;width:100px;height:24px;background:#EEEEEE;border:1px solid #8D8D8D;"></div>
<div class="t" style="left:909px;top:662px;letter-spacing:0.188px;font-weight:bold;font-size:14px;line-height:14px">0.00</div>
<div class="a" style="left:9px;top:692px;width:1170px;height:23px;border:1px solid #A8A8A8;border-top:2px solid #9C9C9C;background:#fff"></div>
<div class="a" style="left:340px;top:50px;width:147px;height:157px;background:#EEEEEE;border:1px solid #7D9BCF"></div>
<div class="a" style="left:340px;top:53px;width:148px;height:20px;background:#FBB06A;border:2px solid #B00C0C"></div>
<div class="t" style="left:347px;top:56px;letter-spacing:0.086px;color:#111">Site Preference</div>
<div class="t" style="left:347px;top:75px;letter-spacing:0.235px;color:#111">Resolve</div>
<div class="t" style="left:347px;top:94px;letter-spacing:0.046px;color:#9A9A9A">View Ops Order</div>
<div class="t" style="left:347px;top:113px;letter-spacing:0.196px;color:#111">Change Shipping Site</div>
<div class="t" style="left:347px;top:132px;letter-spacing:0.171px;color:#111">Change Returning Site</div>
<div class="t" style="left:347px;top:151px;letter-spacing:0.081px;color:#111">Reserve Back To Pool</div>
<div class="t" style="left:347px;top:170px;letter-spacing:0.076px;color:#111">Back To Drop Ship</div>
<div class="t" style="left:347px;top:189px;letter-spacing:0.096px;color:#9A9A9A">Ops Modifications</div>
<svg class="a" style="left:476px;top:191px;" width="6" height="9" viewBox="0 0 6 9"><path d="M0.5 0.5 V8.5 L5 4.5 Z" fill="#A0A0A0"/></svg>
<div class="a" style="left:511px;top:38px;width:380px;height:350px;background:#E8916A;border:1px solid #C97B58"></div>
<svg class="a" style="left:521px;top:45px;" width="16" height="16" viewBox="0 0 16 16"><rect x="0" y="0" width="16" height="16" fill="#C9CBCE"/><rect x="0" y="0" width="16" height="2" fill="#2F72C8"/><rect x="0" y="14" width="16" height="2" fill="#2F72C8"/><path d="M2.5 4.5 V11 M4 7.5 L8.3 13.2" stroke="#151515" stroke-width="1.3" fill="none"/><path d="M2.5 4.6 H5 Q6.6 4.6 6.6 6 Q6.6 7.5 5 7.5 H2.5" stroke="#151515" stroke-width="1.1" fill="none"/><path d="M9.6 7 Q10.5 5.6 12 5.6 Q13.5 5.6 13.5 7 Q13.5 8.5 9.8 11 H14" stroke="#202028" stroke-width="1.1" fill="none"/></svg>
<div class="t" style="left:627px;top:45px;font-size:14.4px;line-height:18px;color:#2a2a2a">E-Pool Site Preference</div>
<div class="a" style="left:853px;top:39px;width:31px;height:20px;background:#C75050"></div>
<svg class="a" style="left:865px;top:45.5px;" width="9" height="8" viewBox="0 0 9 8"><path d="M0.7 0.8 L8.3 7.7 M8.3 0.8 L0.7 7.7" stroke="#fff" stroke-width="1.8"/></svg>
<div class="a" style="left:519px;top:69px;width:364px;height:311px;background:#fff"></div>
<div class="a" style="left:519px;top:69px;width:364px;height:45px;border:1px solid #C8C8C8;border-right:2px solid #9A9A9A;border-bottom:2px solid #8A8A8A;background:#fff"></div>
<div class="a" style="left:523px;top:73px;width:29px;height:29px;border:1px solid #B4B4B4;background:#fff"></div>
<svg class="a" style="left:523px;top:73px;" width="29" height="29" viewBox="0 0 29 29"><defs><linearGradient id="ck" x1="0" y1="0" x2="0" y2="1"><stop offset="0" stop-color="#A8D888"/><stop offset="0.5" stop-color="#78C048"/><stop offset="1" stop-color="#4A9A2A"/></linearGradient></defs>
<path d="M3.2 13.7 L7.4 9.2 L13.2 14.4 L22.4 6.2 L26.9 10.2 L13.2 23.9 Z" fill="url(#ck)" stroke="#3C8420" stroke-width="0.9"/></svg>
<div class="a" style="left:848px;top:73px;width:29px;height:29px;border:1px solid #B4B4B4;background:#fff"></div>
<svg class="a" style="left:852px;top:77px;" width="22" height="22" viewBox="0 0 22 22"><defs><linearGradient id="ex852" x1="0" y1="0" x2="1" y2="1"><stop offset="0" stop-color="#E04028"/><stop offset="0.5" stop-color="#FF3A10"/><stop offset="1" stop-color="#FFA040"/></linearGradient></defs>
<rect x="0.5" y="0.5" width="21" height="21" rx="3" fill="url(#ex852)" stroke="#A01010" stroke-width="1"/>
<text x="11" y="15" text-anchor="middle" font-family="Liberation Sans" font-size="10.5" fill="#fff" letter-spacing="-0.5">EXIT</text></svg>
<div class="a" style="left:519px;top:114px;width:364px;height:266px;border:1px solid #B8B8B8;background:#fff"></div>
<div class="a" style="left:520px;top:115px;width:362px;height:264px;border:1px solid #fff"></div>
<div class="a" style="left:521px;top:116px;width:360px;height:261px;border:1px solid #7A8DA4;border-right-color:#9AA8B8"></div>
<div class="a" style="left:522px;top:117px;width:358px;height:20px;background:#F4703E"></div>
<div class="a" style="left:0;top:0;width:880px;height:724px;overflow:hidden">
<div class="a" style="left:522px;top:117px;width:19px;height:19px;background:#C44B2B;border:1px solid #8A381C;box-shadow:inset 0 0 0 1px #F4703E"></div>
<div class="t" style="left:521px;top:121px;width:21px;text-align:center;letter-spacing:-0.004px;color:#fff">S</div>
<div class="a" style="left:542px;top:117px;width:119px;height:19px;background:#C44B2B;border:1px solid #8A381C;box-shadow:inset 0 0 0 1px #F4703E"></div>
<div class="t" style="left:541px;top:121px;width:121px;text-align:center;letter-spacing:-0.002px;color:#fff">Site ID</div>
<div class="a" style="left:662px;top:117px;width:199px;height:19px;background:#C44B2B;border:1px solid #8A381C;box-shadow:inset 0 0 0 1px #F4703E"></div>
<div class="t" style="left:661px;top:121px;width:201px;text-align:center;letter-spacing:0.109px;color:#fff">Site Name</div>
</div>
<div class="a" style="left:862px;top:117px;width:18px;height:19px;background:#C44B2B;border-top:1px solid #F4703E"></div>
<div class="a" style="left:522px;top:136px;width:340px;height:19px;background:#FA9A49;border-bottom:1px solid #C8783A;border-right:1px solid #C8783A"></div>
<div class="a" style="left:541px;top:136px;width:1px;height:19px;background:#C8783A"></div>
<div class="a" style="left:661px;top:136px;width:1px;height:19px;background:#C8783A"></div>
<svg class="a" style="left:525px;top:140px;" width="13" height="13" viewBox="0 0 13 13"><defs><linearGradient id="cg" x1="0" y1="0" x2="1" y2="1"><stop offset="0" stop-color="#FFF4EC"/><stop offset="1" stop-color="#F28C3E"/></linearGradient></defs><rect x="1" y="1" width="11" height="11" fill="url(#cg)"/><path d="M0.5 12.5 V0.5 H12.5" fill="none" stroke="#7890A8"/><path d="M0.5 12.5 H12.5 V0.5" fill="none" stroke="#ffffff"/><path d="M1.5 11.5 V1.5 H11.5" fill="none" stroke="#ffffff"/><path d="M1.5 11.5 H11.5 V1.5" fill="none" stroke="#7890A8"/><path d="M4 5 V9.8" stroke="#151515" stroke-width="2"/><path d="M4.6 9.4 L9.8 3.4" stroke="#151515" stroke-width="1.4"/></svg>
<div class="t" style="left:543px;top:140px;">PARIS</div>
<div class="t" style="left:663px;top:140px;">PARIS</div>
<div class="a" style="left:522px;top:155px;width:340px;height:19px;background:#fff;border-bottom:1px solid #C8783A;border-right:1px solid #C8783A"></div>
<div class="a" style="left:541px;top:155px;width:1px;height:19px;background:#C8783A"></div>
<div class="a" style="left:661px;top:155px;width:1px;height:19px;background:#C8783A"></div>
<svg class="a" style="left:525px;top:159px;" width="13" height="13" viewBox="0 0 13 13"><defs><linearGradient id="cg" x1="0" y1="0" x2="1" y2="1"><stop offset="0" stop-color="#FFF4EC"/><stop offset="1" stop-color="#F28C3E"/></linearGradient></defs><rect x="1" y="1" width="11" height="11" fill="url(#cg)"/><path d="M0.5 12.5 V0.5 H12.5" fill="none" stroke="#7890A8"/><path d="M0.5 12.5 H12.5 V0.5" fill="none" stroke="#ffffff"/><path d="M1.5 11.5 V1.5 H11.5" fill="none" stroke="#ffffff"/><path d="M1.5 11.5 H11.5 V1.5" fill="none" stroke="#7890A8"/><path d="M4 5 V9.8" stroke="#151515" stroke-width="2"/><path d="M4.6 9.4 L9.8 3.4" stroke="#151515" stroke-width="1.4"/></svg>
<div class="t" style="left:543px;top:159px;letter-spacing:0.109px;">BERLIN</div>
<div class="t" style="left:663px;top:159px;letter-spacing:0.109px;">BERLIN</div>
<div class="a" style="left:522px;top:174px;width:340px;height:19px;background:#fff;border-bottom:1px solid #C8783A;border-right:1px solid #C8783A"></div>
<div class="a" style="left:541px;top:174px;width:1px;height:19px;background:#C8783A"></div>
<div class="a" style="left:661px;top:174px;width:1px;height:19px;background:#C8783A"></div>
<svg class="a" style="left:525px;top:178px;" width="13" height="13" viewBox="0 0 13 13"><defs><linearGradient id="cg" x1="0" y1="0" x2="1" y2="1"><stop offset="0" stop-color="#FFF4EC"/><stop offset="1" stop-color="#F28C3E"/></linearGradient></defs><rect x="1" y="1" width="11" height="11" fill="url(#cg)"/><path d="M0.5 12.5 V0.5 H12.5" fill="none" stroke="#7890A8"/><path d="M0.5 12.5 H12.5 V0.5" fill="none" stroke="#ffffff"/><path d="M1.5 11.5 V1.5 H11.5" fill="none" stroke="#ffffff"/><path d="M1.5 11.5 H11.5 V1.5" fill="none" stroke="#7890A8"/><path d="M4 5 V9.8" stroke="#151515" stroke-width="2"/><path d="M4.6 9.4 L9.8 3.4" stroke="#151515" stroke-width="1.4"/></svg>
<div class="t" style="left:543px;top:178px;letter-spacing:0.040px;">BUDAPEST</div>
<div class="t" style="left:663px;top:178px;letter-spacing:0.040px;">BUDAPEST</div>
<div class="a" style="left:522px;top:193px;width:340px;height:19px;background:#fff;border-bottom:1px solid #C8783A;border-right:1px solid #C8783A"></div>
<div class="a" style="left:541px;top:193px;width:1px;height:19px;background:#C8783A"></div>
<div class="a" style="left:661px;top:193px;width:1px;height:19px;background:#C8783A"></div>
<svg class="a" style="left:525px;top:197px;" width="13" height="13" viewBox="0 0 13 13"><defs><linearGradient id="cg" x1="0" y1="0" x2="1" y2="1"><stop offset="0" stop-color="#FFF4EC"/><stop offset="1" stop-color="#F28C3E"/></linearGradient></defs><rect x="1" y="1" width="11" height="11" fill="url(#cg)"/><path d="M0.5 12.5 V0.5 H12.5" fill="none" stroke="#7890A8"/><path d="M0.5 12.5 H12.5 V0.5" fill="none" stroke="#ffffff"/><path d="M1.5 11.5 V1.5 H11.5" fill="none" stroke="#ffffff"/><path d="M1.5 11.5 H11.5 V1.5" fill="none" stroke="#7890A8"/></svg>
<div class="t" style="left:543px;top:197px;">COLOGNE</div>
<div class="t" style="left:663px;top:197px;">COLOGNE</div>
<div class="a" style="left:522px;top:212px;width:340px;height:19px;background:#fff;border-bottom:1px solid #C8783A;border-right:1px solid #C8783A"></div>
<div class="a" style="left:541px;top:212px;width:1px;height:19px;background:#C8783A"></div>
<div class="a" style="left:661px;top:212px;width:1px;height:19px;background:#C8783A"></div>
<svg class="a" style="left:525px;top:216px;" width="13" height="13" viewBox="0 0 13 13"><defs><linearGradient id="cg" x1="0" y1="0" x2="1" y2="1"><stop offset="0" stop-color="#FFF4EC"/><stop offset="1" stop-color="#F28C3E"/></linearGradient></defs><rect x="1" y="1" width="11" height="11" fill="url(#cg)"/><path d="M0.5 12.5 V0.5 H12.5" fill="none" stroke="#7890A8"/><path d="M0.5 12.5 H12.5 V0.5" fill="none" stroke="#ffffff"/><path d="M1.5 11.5 V1.5 H11.5" fill="none" stroke="#ffffff"/><path d="M1.5 11.5 H11.5 V1.5" fill="none" stroke="#7890A8"/></svg>
<div class="t" style="left:543px;top:216px;letter-spacing:0.168px;">MUNICH</div>
<div class="t" style="left:663px;top:216px;letter-spacing:0.168px;">MUNICH</div>
<div class="a" style="left:475px;top:64px;width:85px;height:2px;background:#C40000"></div>
<svg class="a" style="left:553px;top:59px;" width="14" height="12" viewBox="0 0 14 12"><path d="M2 1.5 L11 6 L2 10.5" fill="none" stroke="#C40000" stroke-width="2.4"/></svg>
</body></html>
